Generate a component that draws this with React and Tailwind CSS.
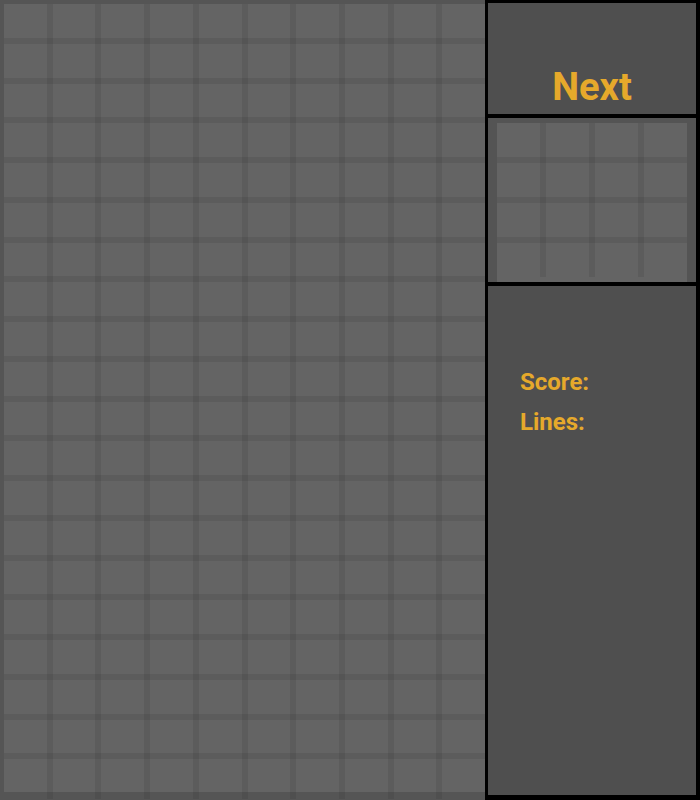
const BOARD_ROWS = 20;
const BOARD_COLS = 10;

function Cell({ last }) {
  return (
    <div
      className={
        last
          ? "flex-1 h-full"
          : "flex-1 h-full border-r-[6px] border-[rgba(0,0,0,0.07)]"
      }
    />
  );
}

function Board() {
  return (
    <div className="h-full w-[485px] shrink-0 overflow-hidden bg-[#555555] pl-1 pt-1">
      <div className="flex h-[795px] w-[487px] flex-col bg-[#646464]">
        {Array.from({ length: BOARD_ROWS }).map((_, r) => (
          <div
            key={r}
            className={
              r === BOARD_ROWS - 1
                ? "flex flex-1 shadow-[inset_0_-7px_0_rgba(0,0,0,0.15)]"
                : "flex flex-1 shadow-[inset_0_-6px_0_rgba(0,0,0,0.07)]"
            }
          >
            {Array.from({ length: BOARD_COLS }).map((_, c) => (
              <Cell key={c} />
            ))}
          </div>
        ))}
      </div>
    </div>
  );
}

function Preview() {
  return (
    <div className="flex w-[190px] flex-col bg-[#646464]">
      {[0, 1, 2, 3].map((r) => (
        <div
          key={r}
          className={
            r === 3
              ? "flex h-[34px]"
              : "flex h-[40px] shadow-[inset_0_-6px_0_rgba(0,0,0,0.07)]"
          }
        >
          {[0, 1, 2, 3].map((c) => (
            <Cell key={c} last={c === 3} />
          ))}
        </div>
      ))}
    </div>
  );
}

export default function App() {
  return (
    <div className="flex h-[800px] w-[700px] bg-[#505050] font-['Roboto',sans-serif] font-bold text-[#e6a92b]">
      <Board />
      <aside className="flex flex-1 flex-col gap-1 bg-black pb-[5px] pl-[3px] pr-1 pt-[3px]">
        <div className="flex h-[111px] flex-col items-center justify-end bg-[#4f4f4f] pb-2">
          <h2 className="text-[38px] leading-none">Next</h2>
        </div>
        <div className="flex h-[164px] justify-center bg-[#545454] pt-[5px]">
          <Preview />
        </div>
        <div className="flex flex-1 flex-col gap-2 bg-[#4f4f4f] px-8 pt-20 text-2xl leading-8">
          <p>Score:</p>
          <p>Lines:</p>
        </div>
      </aside>
    </div>
  );
}
